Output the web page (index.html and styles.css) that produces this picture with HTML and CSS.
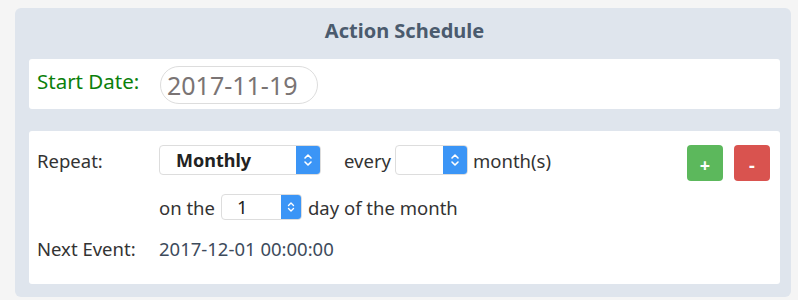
FILE: index.html
```html
<!DOCTYPE html>
<html>
<head>
<meta charset="utf-8">
<link rel="stylesheet" href="styles.css">
</head>
<body>
<div class="panel">
  <h2 class="title">Action Schedule</h2>
  <div class="card start-card">
    <span class="start-label">Start Date:</span>
    <div class="date-input">2017-11-19</div>
  </div>
  <div class="card repeat-card">
    <div class="rows">
      <div class="row row1">
        <span class="label">Repeat:</span>
        <div class="field">
          <div class="select select-month"><span class="sel-text bold">Monthly</span><span class="arrows"><svg width="10" height="16" viewBox="0 0 10 16"><path d="M2 6 L5 3 L8 6 M2 10 L5 13 L8 10" fill="none" stroke="#fff" stroke-width="1.6" stroke-linecap="round" stroke-linejoin="round"/></svg></span></div>
          <span class="word every">every</span>
          <div class="select select-every"><span class="sel-text"></span><span class="arrows"><svg width="10" height="16" viewBox="0 0 10 16"><path d="M2 6 L5 3 L8 6 M2 10 L5 13 L8 10" fill="none" stroke="#fff" stroke-width="1.6" stroke-linecap="round" stroke-linejoin="round"/></svg></span></div>
          <span class="word">month(s)</span>
        </div>
      </div>
      <div class="row row2">
        <span class="label"></span>
        <div class="field">
          <span class="word">on the</span>
          <div class="select select-day"><span class="sel-text">1</span><span class="arrows small"><svg width="8" height="14" viewBox="0 0 8 14"><path d="M1.5 5.5 L4 3 L6.5 5.5 M1.5 8.5 L4 11 L6.5 8.5" fill="none" stroke="#fff" stroke-width="1.4" stroke-linecap="round" stroke-linejoin="round"/></svg></span></div>
          <span class="word">day of the month</span>
        </div>
      </div>
      <div class="row row3">
        <span class="label">Next Event:</span>
        <span class="next">2017-12-01 00:00:00</span>
      </div>
    </div>
    <div class="buttons">
      <button class="btn btn-add">+</button>
      <button class="btn btn-del">-</button>
    </div>
  </div>
</div>
</body>
</html>
```
FILE: styles.css
```css
html, body {
  margin: 0;
  padding: 0;
  background: #f5f5f5;
  font-family: "Noto Sans", "Open Sans", sans-serif;
}
body {
  padding: 8px 7px 0 15px;
}
.panel {
  width: 776px;
  height: 289px;
  box-sizing: border-box;
  background: #dfe5ed;
  border-radius: 6px;
  padding: 0 11px 0 14px;
}
.title {
  margin: 0;
  height: 51px;
  line-height: 46px;
  text-align: center;
  font-size: 20px;
  font-weight: 700;
  color: #4b5b6e;
}
.card {
  background: #fff;
  border-radius: 3px;
}
.start-card {
  height: 50px;
  display: flex;
  align-items: center;
  padding-left: 8px;
}
.start-label {
  color: #0b800b;
  font-size: 20.5px;
  width: 123px;
  margin-top: -6px;
}
.date-input {
  width: 158px;
  height: 38px;
  box-sizing: border-box;
  border: 1px solid #ddd;
  border-radius: 19px;
  font-size: 25px;
  color: #7a7474;
  line-height: 36px;
  padding-left: 6px;
  margin-top: 2px;
}
.repeat-card {
  margin-top: 22px;
  height: 153px;
  box-sizing: border-box;
  display: flex;
  justify-content: space-between;
  padding: 14px 10px 0 8px;
}
.rows {
  display: flex;
  flex-direction: column;
}
.row {
  display: flex;
  align-items: center;
  font-size: 18.5px;
  color: #333;
}
.row1 { height: 30px; }
.row2 { height: 26px; margin-top: 19px; }
.row3 { height: 22px; margin-top: 17px; }
.label {
  width: 122px;
  flex: none;
}
.field {
  display: flex;
  align-items: center;
}
.word { white-space: nowrap; }
.every { margin-left: 23px; margin-right: 4px; }
.select {
  display: flex;
  box-sizing: border-box;
  border: 1px solid #ddd;
  border-radius: 4px;
  background: #fff;
  overflow: hidden;
  flex: none;
}
.sel-text {
  flex: 1;
  color: #222;
}
.bold { font-weight: 700; }
.arrows {
  width: 24px;
  background: #3b95f6;
  display: flex;
  align-items: center;
  justify-content: center;
}
.arrows.small { width: 20px; }
.select-month {
  width: 162px;
  height: 30px;
}
.select-month .sel-text {
  padding-left: 16px;
  line-height: 28px;
  font-size: 18px;
}
.select-every {
  width: 73px;
  height: 30px;
  margin-right: 5px;
}
.select-day {
  width: 81px;
  height: 26px;
  margin: 0 6px 0 6px;
}
.select-day .sel-text {
  padding-left: 15px;
  line-height: 24px;
}
.next {
  color: #3d4b5c;
}
.buttons {
  display: flex;
  gap: 11px;
  align-items: flex-start;
}
.btn {
  width: 36px;
  height: 36px;
  border: none;
  border-radius: 4px;
  color: #fff;
  font-size: 18px;
  font-weight: 700;
  font-family: "Noto Sans", sans-serif;
  padding: 3px 0 0 0;
}
.btn-add { background: #5cb85c; }
.btn-del { background: #d9534f; }
```
